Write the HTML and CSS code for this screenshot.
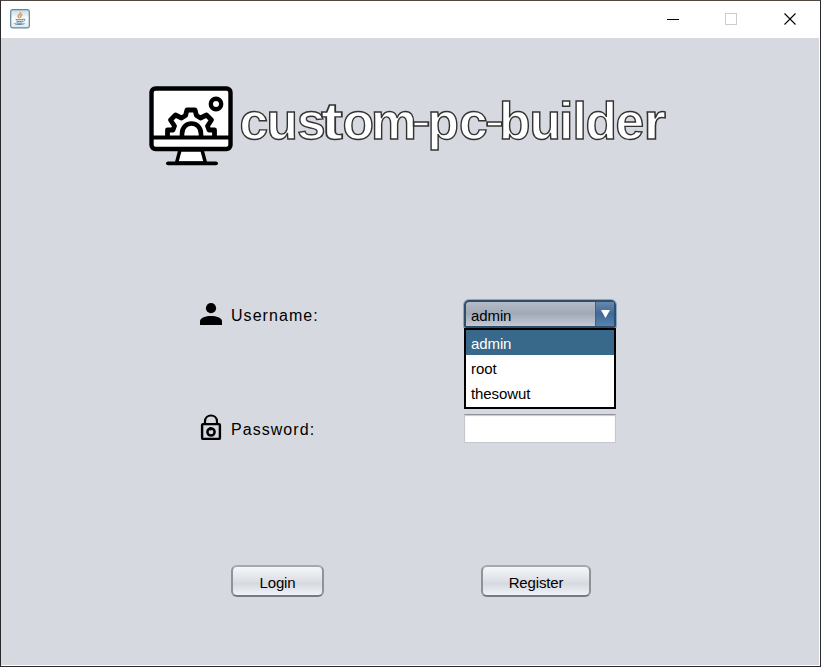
FILE: index.html
```html
<!DOCTYPE html>
<html lang="en">
<head>
<meta charset="utf-8">
<title>custom-pc-builder</title>
<link rel="stylesheet" href="styles.css">
</head>
<body>
<div class="window">
  <header class="titlebar">
    <svg class="java" width="20" height="20" viewBox="0 0 20 20" fill="none">
      <defs><linearGradient id="tile" x2="0" y2="1"><stop stop-color="#c5d8e3"/><stop offset=".5" stop-color="#fff"/><stop offset="1" stop-color="#dce8ed"/></linearGradient></defs>
      <rect x=".7" y=".7" width="18.6" height="18.1" rx="1.8" fill="url(#tile)" stroke="#62879d" stroke-width="1.2"/>
      <path d="M10.500 3.200c1 2-3 2.600-2.400 4.200.3.8 1.200 1 1.300 1.900M12.400 5.500c-2.600 1.200-1.900 2-1.200 3.200" stroke="#d89b55" stroke-width="1.500"/>
      <path d="M5.500 10.200c2 .8 6 .7 8 0M6.300 12c2 .8 5 .7 6.700 0M13.500 10.200c2-.7 2 1.500-.2 2M4.500 14c-1 1.600 8 2.200 10 .3M6.500 13.800c2 .7 4.500.7 6 0" stroke="#587f9d"/>
    </svg>
    <svg class="controls" width="130" height="14" viewBox="0 0 130 14" fill="none">
      <path d="M0 7.500h12" stroke="#000"/>
      <rect x="58.500" y="1.500" width="11" height="11" stroke="#ccc"/>
      <path d="M117.500 1.500l11 11m0-11l-11 11" stroke="#000" stroke-width="1.1"/>
    </svg>
  </header>
  <main class="content">
    <svg class="logo" width="530" height="90" viewBox="0 0 530 90" fill="none">
      <rect x="6.500" y="10.500" width="79" height="60.500" rx="4" fill="#fff" stroke="#000" stroke-width="4.400"/>
      <path d="M6 59.500h80" stroke="#000" stroke-width="4"/>
      <path d="M22.500 59v-7h5.500l1.500-4-4-6 5-5 6 3 4-2.500 1.500-5.500h8l1.500 5.500 4 2.500 6-3 5 5-4 6 1.500 4h5.500v7" stroke="#000" stroke-width="4.800" stroke-linejoin="round"/>
      <path d="M37 59v-3c0-14 19-14 19 0v3" stroke="#000" stroke-width="4.600"/>
      <circle cx="71" cy="26" r="5.200" stroke="#000" stroke-width="4.400"/>
      <path d="M35 72l-3.500 13h29l-3.500-13z" fill="#fff" stroke="#000" stroke-width="3.500"/>
      <path d="M23 85.300h48" stroke="#000" stroke-width="3.800" stroke-linecap="round"/>
      <text class="wordmark" y="60.500"><tspan x="94.500 121.500 152">cus</tspan><tspan x="176" textLength="22" lengthAdjust="spacingAndGlyphs">t</tspan><tspan x="197.500 226">om</tspan><tspan class="dash" x="266" y="60" textLength="20" lengthAdjust="spacingAndGlyphs">-</tspan><tspan x="282.500 314" y="60.500">pc</tspan><tspan class="dash" x="339.500" y="60" textLength="20" lengthAdjust="spacingAndGlyphs">-</tspan><tspan x="354 384.500 414 427.500 440.500 470.500" y="60.500">builde</tspan><tspan x="498.500" textLength="22.500" lengthAdjust="spacingAndGlyphs">r</tspan></text>
    </svg>
    <form class="form">
      <div class="row username">
        <label class="label" for="user">
          <svg width="22" height="24" viewBox="0 0 22 24"><circle cx="11" cy="6.200" r="5.100"/><path d="M0 23v-3.500C0 15.500 6 14 11 14s11 1.500 11 5.500V23z"/></svg>
          <span>Username:</span>
        </label>
        <div class="combo" id="user">
          <span class="value">admin</span>
          <span class="arrow"><svg width="9" height="8" viewBox="0 0 9 8"><path d="M0 0h9L4.500 8z" fill="#fff"/></svg></span>
          <ul class="menu"><li class="selected">admin</li><li>root</li><li>thesowut</li></ul>
        </div>
      </div>
      <div class="row">
        <label class="label" for="pass">
          <svg width="22" height="27" viewBox="0 0 22 27" fill="none" stroke="#000"><path d="M5 11V7.500C5 -.5 17 -.5 17 7.500V11" stroke-width="2.200"/><rect x="2.100" y="10.100" width="17.800" height="14.800" rx="1" stroke-width="2.400"/><circle cx="11" cy="18" r="3.600" stroke-width="2.500"/><path d="M10.500 13v3.500" stroke-width="1.800"/></svg>
          <span>Password:</span>
        </label>
        <input class="password" id="pass" type="password">
      </div>
      <div class="actions">
        <button class="button login" type="button">Login</button>
        <button class="button register" type="button">Register</button>
      </div>
    </form>
  </main>
</div>
</body>
</html>
```

FILE: styles.css
```css
* { box-sizing: border-box; }
body { margin: 0; font-family: "Liberation Sans", Arial, sans-serif; font-size: 15px; color: #000; }
.window { width: 821px; height: 667px; border: 1px solid #29292c; border-top-color: #514740; background: #fff; padding: 0 1px 1px 0; overflow: hidden; }
.titlebar { height: 37px; display: flex; justify-content: space-between; align-items: flex-start; padding: 8px 22px 0 9px; }
.controls { margin-top: 3px; }
.content { height: 627px; background: #d6d9df; padding-top: 40px; }
.logo { display: block; margin-left: 144px; }
.wordmark { font: bold 51.5px "Liberation Sans", Arial, sans-serif; fill: #fff; stroke: #333; stroke-width: 1.4px; }
.wordmark .dash { font-weight: normal; stroke-width: 1.5px; }
.form { margin: 131px 0 0 199px; width: 420px; }
.row { display: flex; height: 114px; align-items: flex-start; }
.label { width: 264px; height: 29px; display: flex; align-items: center; gap: 9px; font-size: 16px; letter-spacing: 1.05px; }
.label span { padding-top: 5px; }
.combo { position: relative; width: 152px; height: 28px; margin-top: 1px; display: flex; border: 2px solid #304d69; border-radius: 5px 5px 2px 2px; background: linear-gradient(#b5bbc7, #a0a9b6 48%, #c3cad5); box-shadow: 0 0 0 1px #86a8c5; letter-spacing: -.1px; }
.value { flex: 1; padding: 5px 0 0 5px; line-height: 17px; }
.arrow { width: 19px; display: flex; align-items: center; justify-content: center; padding-bottom: 1px; background: linear-gradient(#6788aa, #406a94 50%, #5685b2); border-left: 1px solid #40617f; }
.menu { position: absolute; left: -2px; top: 26px; width: 152px; height: 81px; margin: 0; padding: 0; list-style: none; border: 2px solid #000; background: #fff; }
.menu li { height: 25px; line-height: 27px; padding-left: 5px; }
.menu .selected { background: #39698a; color: #fff; }
.password { width: 152px; height: 29px; margin-top: 1px; background: #fff; border: 1px solid #c4c7cc; border-top: 1px solid #909299; box-shadow: inset 0 1px 1px #c7c9ce; outline: none; }
.actions { display: flex; margin: 38px 0 0 31px; gap: 157px; }
.button { height: 32px; border: 2px solid #8e9299; border-top-color: #a5a9b0; border-bottom-color: #767b83; border-radius: 6px; padding: 2px 0 0; background: linear-gradient(#f5f6f8, #dfe2e7 45%, #d6dae0 60%, #f0f3f8); font: 15px "Liberation Sans", Arial, sans-serif; letter-spacing: -.15px; color: #000; }
.login { width: 93px; }
.register { width: 110px; }
```
